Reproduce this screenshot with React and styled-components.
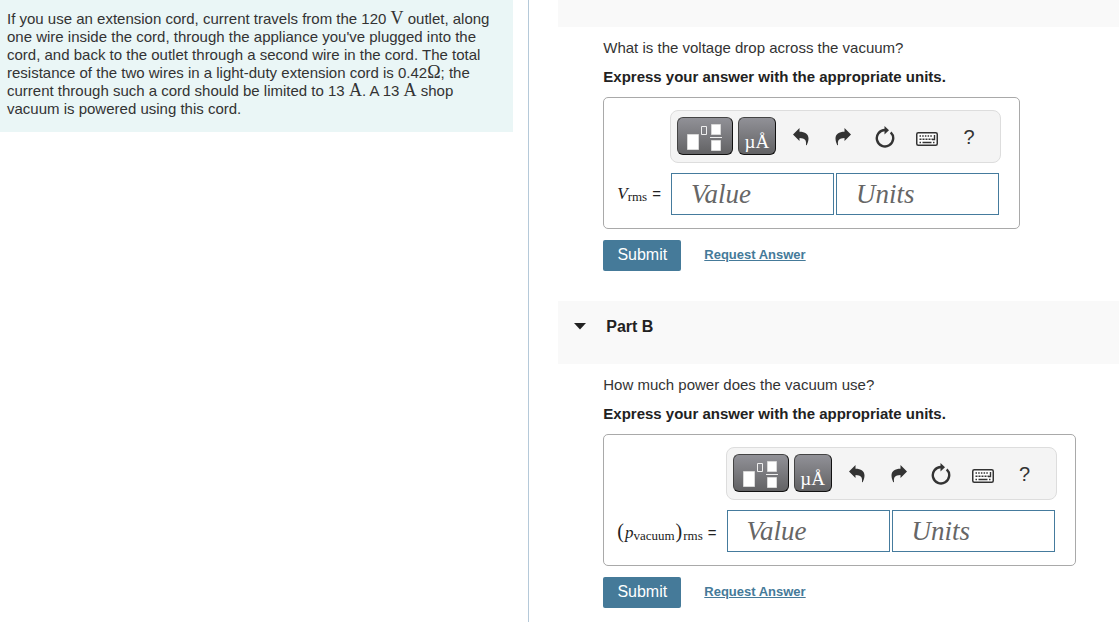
import React from "react";
import styled, { createGlobalStyle } from "styled-components";

const GlobalStyle = createGlobalStyle`
  *, *::before, *::after { box-sizing: border-box; }
  body {
    margin: 0;
    background: #fff;
    color: #333;
    font-family: "Liberation Sans", Arial, sans-serif;
    font-size: 15px;
    line-height: 18px;
  }
  button, input { font: inherit; margin: 0; }
`;

const Page = styled.div`
  display: flex;
  align-items: stretch;
  min-height: 100vh;
`;

const ProblemColumn = styled.aside`
  flex: 0 0 47.3%;
  padding-right: 15px;
  border-right: 1px solid #b5c9d9;
`;

const Problem = styled.p`
  margin: 0;
  padding: 10px 12px 14px 7px;
  background: #eaf6f6;
`;

const Unit = styled.span`
  font-family: "Liberation Serif", serif;
  font-size: 18px;
  line-height: 14px;
`;

const Parts = styled.main`
  flex: 1;
  min-width: 0;
  padding-left: 29px;
`;

const PartBar = styled.header`
  display: flex;
  align-items: center;
  height: ${(p) => (p.$tail ? 27 : 63)}px;
  padding: 0 16px 12px;
  background: #f9f9f9;
`;

const Toggle = styled.button`
  display: flex;
  align-items: center;
  gap: 20px;
  padding: 0;
  border: 0;
  background: none;
  color: #222;
  font-size: 16px;
  font-weight: bold;
`;

const PartBody = styled.section`
  display: flex;
  flex-direction: column;
  align-items: flex-start;
  gap: 11px;
  padding: 12px 16px 30px 45px;
`;

const Question = styled.p`
  margin: 0;
  font-weight: ${(p) => (p.$strong ? "bold" : "normal")};
  color: ${(p) => (p.$strong ? "#222" : "#333")};
`;

const AnswerBox = styled.div`
  display: grid;
  grid-template-columns: auto auto;
  row-gap: 10px;
  align-items: center;
  padding: 12px 18px 13px 13px;
  border: 1px solid #a9a9a9;
  border-radius: 5px;
`;

const Toolbar = styled.div`
  grid-column: 2;
  display: flex;
  align-items: center;
  gap: 5px;
  height: 53px;
  padding: 0 9px 1px 6px;
  border: 1px solid #ddd;
  border-radius: 8px;
  background: #f4f4f4;
`;

const PaletteButton = styled.button`
  display: flex;
  align-items: center;
  justify-content: center;
  width: ${(p) => (p.$wide ? 56 : 38)}px;
  height: 38px;
  padding: ${(p) => (p.$wide ? 0 : 12)}px 0 0;
  border: 1px solid #111;
  border-top-color: #444;
  border-left-color: #444;
  border-radius: 6px;
  background: linear-gradient(#919197, #626264);
  color: #fff;
  font-family: "Liberation Serif", serif;
  font-size: 19px;
  line-height: 20px;
`;

const ToolGroup = styled.div`
  display: flex;
  padding-top: 2px;
`;

const ToolButton = styled.button`
  display: flex;
  align-items: center;
  justify-content: center;
  width: 42px;
  height: 38px;
  padding: 0 2px 0 0;
  border: 0;
  background: none;
  color: #333;
  font-size: 20px;
`;

const Symbol = styled.span`
  padding-right: 9px;
  color: #222;
  font-family: "Liberation Serif", serif;
  font-size: 17px;
  white-space: nowrap;

  sub {
    padding-right: 1px;
    font-size: 13px;
    line-height: 1;
    vertical-align: -2px;
  }
`;

const Paren = styled.span`
  padding-right: 1px;
  font-size: 20px;
  line-height: 1;
`;

const Equals = styled.span`
  padding-left: 4px;
  font-family: "Liberation Sans", Arial, sans-serif;
  font-size: 15px;
`;

const Fields = styled.div`
  display: flex;
  gap: 2px;
  padding-left: 1px;
`;

const Field = styled.input`
  width: 163px;
  height: 42px;
  padding: 0 19px;
  border: 1px solid #457b9d;
  border-radius: 0;
  background: #fff;
  color: #333;
  font-family: "Liberation Serif", serif;
  font-size: 27px;
  font-style: italic;

  &::placeholder { color: #666; opacity: 1; }
`;

const Actions = styled.div`
  display: flex;
  align-items: center;
  gap: 23px;
`;

const Submit = styled.button`
  width: 78px;
  height: 31px;
  padding: 0 0 2px;
  border: 0;
  border-radius: 2px;
  background: #457a99;
  color: #fff;
  font-size: 16px;
`;

const RequestLink = styled.a`
  padding-bottom: 2px;
  color: #457a99;
  font-size: 13px;
  font-weight: bold;
`;

const Caret = () => (
  <svg width="12" height="7" viewBox="0 0 12 7" aria-hidden="true">
    <path d="M0 0h12L6 6.500z" fill="#222" />
  </svg>
);

const TemplateIcon = () => (
  <svg width="36" height="30" viewBox="0 0 36 30" aria-hidden="true">
    <path d="M.5 13.500h11v15H.5z" fill="#fff" stroke="#d8d8d8" />
    <path d="M14.500 5.500h5v8h-5z" fill="none" stroke="#eee" />
    <path d="M24.500 3.500h9v10h-9z" fill="#fff" stroke="#d8d8d8" />
    <path d="M23 16.500h12" stroke="#eee" />
    <path d="M24.500 19.500h9v10h-9z" fill="#fff" stroke="#d8d8d8" />
  </svg>
);

const ArrowIcon = ({ mirrored }) => (
  <svg width="16" height="18" viewBox="0 0 16 18" aria-hidden="true">
    <path
      d="M0 6.500 6.500 0v3.800c5.500 0 9 2.300 9 6.700 0 2.500-.9 4.800-1.700 6.500-.5.500-1 .2-.8-.4.500-4.600-1.100-6.600-6.500-6.700V13z"
      fill="currentColor"
      transform={mirrored ? "matrix(-1 0 0 1 16 0)" : undefined}
    />
  </svg>
);

const ResetIcon = () => (
  <svg width="20" height="22" viewBox="0 0 20 22" aria-hidden="true">
    <path d="M15.700 6.300A8.200 8.200 0 1 1 10 4" fill="none" stroke="currentColor" strokeWidth="2.400" />
    <path d="M9.500 0 14 4.200 9.500 8.500z" fill="currentColor" />
  </svg>
);

const KeyboardIcon = () => (
  <svg width="22" height="18" viewBox="0 0 22 18" aria-hidden="true">
    <rect x=".75" y="4.750" width="20.500" height="12.500" rx="1.500" fill="#fff" stroke="currentColor" strokeWidth="1.500" />
    <path d="M3.500 8h13" stroke="currentColor" strokeWidth="1.500" strokeDasharray="1.500 1.200" />
    <path d="M3.500 11.200h13" stroke="currentColor" strokeWidth="1.500" strokeDasharray="2 1" />
    <path d="M18.500 7v4.500H16M3.500 14.500H5m1.500 0h9m1.500 0h1.500" fill="none" stroke="currentColor" strokeWidth="1.400" />
  </svg>
);

function AnswerPart({ id, question, symbol }) {
  return (
    <PartBody>
      <Question>{question}</Question>
      <Question $strong>Express your answer with the appropriate units.</Question>
      <AnswerBox>
        <Toolbar role="toolbar">
          <PaletteButton type="button" $wide aria-label="Templates">
            <TemplateIcon />
          </PaletteButton>
          <PaletteButton type="button">µÅ</PaletteButton>
          <ToolGroup>
            <ToolButton type="button" aria-label="Undo"><ArrowIcon /></ToolButton>
            <ToolButton type="button" aria-label="Redo"><ArrowIcon mirrored /></ToolButton>
            <ToolButton type="button" aria-label="Reset"><ResetIcon /></ToolButton>
            <ToolButton type="button" aria-label="Keyboard shortcuts"><KeyboardIcon /></ToolButton>
            <ToolButton type="button">?</ToolButton>
          </ToolGroup>
        </Toolbar>
        <Symbol as="label" htmlFor={`${id}-value`}>
          {symbol}
          <Equals>=</Equals>
        </Symbol>
        <Fields>
          <Field id={`${id}-value`} placeholder="Value" />
          <Field id={`${id}-units`} aria-label="Units" placeholder="Units" />
        </Fields>
      </AnswerBox>
      <Actions>
        <Submit type="button">Submit</Submit>
        <RequestLink href="#request">Request Answer</RequestLink>
      </Actions>
    </PartBody>
  );
}

export default function App() {
  return (
    <>
      <GlobalStyle />
      <Page>
        <ProblemColumn>
          <Problem>
            If you use an extension cord, current travels from the 120&nbsp;<Unit>V</Unit> outlet,
            along one wire inside the cord, through the appliance you've plugged into the cord, and
            back to the outlet through a second wire in the cord. The total resistance of the two
            wires in a light-duty extension cord is 0.42<Unit>Ω</Unit>; the current through such a
            cord should be limited to 13&nbsp;<Unit>A</Unit>. A 13&nbsp;<Unit>A</Unit> shop vacuum
            is powered using this cord.
          </Problem>
        </ProblemColumn>
        <Parts>
          <PartBar $tail />
          <AnswerPart
            id="part-a"
            question="What is the voltage drop across the vacuum?"
            symbol={<><i>V</i><sub>rms</sub></>}
          />
          <PartBar>
            <Toggle type="button" aria-expanded="true">
              <Caret />
              Part B
            </Toggle>
          </PartBar>
          <AnswerPart
            id="part-b"
            question="How much power does the vacuum use?"
            symbol={<><Paren>(</Paren><i>p</i><sub>vacuum</sub><Paren>)</Paren><sub>rms</sub></>}
          />
        </Parts>
      </Page>
    </>
  );
}
